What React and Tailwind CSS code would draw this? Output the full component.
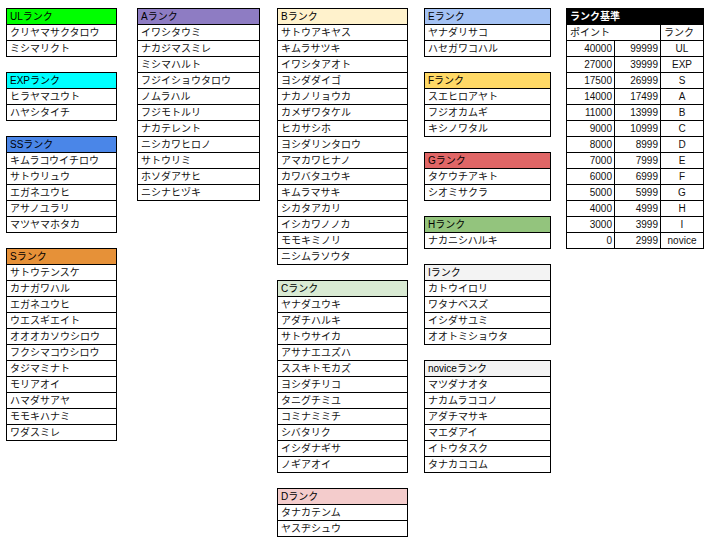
import React from "react";

function RankTable({ title, bg, items, width, titleText = "text-black" }) {
  return (
    <div className={`border-x border-t border-black ${width}`}>
      <div className={`h-4 border-b border-black pl-[3px] leading-[15px] whitespace-nowrap ${bg} ${titleText}`}>
        {title}
      </div>
      {items.map((n, i) => (
        <div key={i} className="h-4 border-b border-black bg-white pl-[3px] leading-[15px] whitespace-nowrap text-[#111]">
          {n}
        </div>
      ))}
    </div>
  );
}

const col1 = [
  { title: "ULランク", bg: "bg-[#00ff00]", items: ["クリヤマサクタロウ", "ミシマリクト"] },
  { title: "EXPランク", bg: "bg-[#00ffff]", items: ["ヒラヤマユウト", "ハヤシタイチ"] },
  { title: "SSランク", bg: "bg-[#4a86e8]", items: ["キムラコウイチロウ", "サトウリュウ", "エガネユウヒ", "アサノユラリ", "マツヤマホタカ"] },
  { title: "Sランク", bg: "bg-[#e69138]", items: ["サトウテンスケ", "カナガワハル", "エガネユウヒ", "ウエスギエイト", "オオオカソウシロウ", "フクシマコウシロウ", "タジマミナト", "モリアオイ", "ハマダサアヤ", "モモキハナミ", "ワダスミレ"] },
];

const col2 = [
  { title: "Aランク", bg: "bg-[#8e7cc3]", items: ["イワシタウミ", "ナカジマスミレ", "ミシマハルト", "フジイショウタロウ", "ノムラハル", "フジモトルリ", "ナカテレント", "ニシカワヒロノ", "サトウリミ", "ホソダアサヒ", "ニシナヒヅキ"] },
];

const col3 = [
  { title: "Bランク", bg: "bg-[#fff2cc]", items: ["サトウアキヤス", "キムラサツキ", "イワシタアオト", "ヨシダダイゴ", "ナカノリョウカ", "カメザワタケル", "ヒカサシホ", "ヨシダリンタロウ", "アマカワヒナノ", "カワバタユウキ", "キムラマサキ", "シカタアカリ", "イシカワノノカ", "モモキミノリ", "ニシムラソウタ"] },
  { title: "Cランク", bg: "bg-[#d9ead3]", items: ["ヤナダユウキ", "アダチハルキ", "サトウサイカ", "アサナエユズハ", "ススキトモカズ", "ヨシダチリコ", "タニグチミユ", "コミナミミチ", "シバタリク", "イシダナギサ", "ノギアオイ"] },
  { title: "Dランク", bg: "bg-[#f4cccc]", items: ["タナカテンム", "ヤスヂシュウ"] },
];

const col4 = [
  { title: "Eランク", bg: "bg-[#a4c2f4]", items: ["ヤナダリサコ", "ハセガワコハル"] },
  { title: "Fランク", bg: "bg-[#ffd966]", items: ["スエヒロアヤト", "フジオカムギ", "キシノワタル"] },
  { title: "Gランク", bg: "bg-[#e06666]", items: ["タケウチアキト", "シオミサクラ"] },
  { title: "Hランク", bg: "bg-[#93c47d]", items: ["ナカニシハルキ"] },
  { title: "Iランク", bg: "bg-[#f3f3f3]", items: ["カトウイロリ", "ワタナベスズ", "イシダサユミ", "オオトミショウタ"] },
  { title: "noviceランク", bg: "bg-[#f3f3f3]", items: ["マツダナオタ", "ナカムラココノ", "アダチマサキ", "マエダアイ", "イトウタスク", "タナカココム"] },
];

const ranks = [
  ["40000", "99999", "UL"],
  ["27000", "39999", "EXP"],
  ["17500", "26999", "S"],
  ["14000", "17499", "A"],
  ["11000", "13999", "B"],
  ["9000", "10999", "C"],
  ["8000", "8999", "D"],
  ["7000", "7999", "E"],
  ["6000", "6999", "F"],
  ["5000", "5999", "G"],
  ["4000", "4999", "H"],
  ["3000", "3999", "I"],
  ["0", "2999", "novice"],
];

function Column({ tables, width }) {
  return (
    <div className="flex flex-col gap-[15px]">
      {tables.map((t) => (
        <RankTable key={t.title} {...t} width={width} />
      ))}
    </div>
  );
}

export default function App() {
  return (
    <div className="w-[708px] h-[552px] bg-white pl-[6px] pt-[8px] flex items-start text-[10px] font-['Liberation_Sans','Noto_Sans_CJK_JP',sans-serif] text-[#111]">
      <Column tables={col1} width="w-[111px]" />
      <div className="ml-[20px]">
        <Column tables={col2} width="w-[123px]" />
      </div>
      <div className="ml-[17px]">
        <Column tables={col3} width="w-[131px]" />
      </div>
      <div className="ml-[16px]">
        <Column tables={col4} width="w-[127px]" />
      </div>
      <div className="ml-[15px] w-[138px] border-x border-t border-black">
        <div className="h-4 border-b border-black bg-black text-white pl-[3px] leading-[15px] font-bold">
          ランク基準
        </div>
        <div className="h-4 border-b border-black flex leading-[15px]">
          <div className="w-[94px] border-r border-black pl-[3px]">ポイント</div>
          <div className="flex-1 pl-[3px]">ランク</div>
        </div>
        {ranks.map((r) => (
          <div key={r[2]} className="h-4 border-b border-black flex leading-[15px]">
            <div className="w-[48px] border-r border-black text-right pr-[2px]">{r[0]}</div>
            <div className="w-[46px] border-r border-black text-right pr-[2px]">{r[1]}</div>
            <div className="flex-1 text-center">{r[2]}</div>
          </div>
        ))}
      </div>
    </div>
  );
}
